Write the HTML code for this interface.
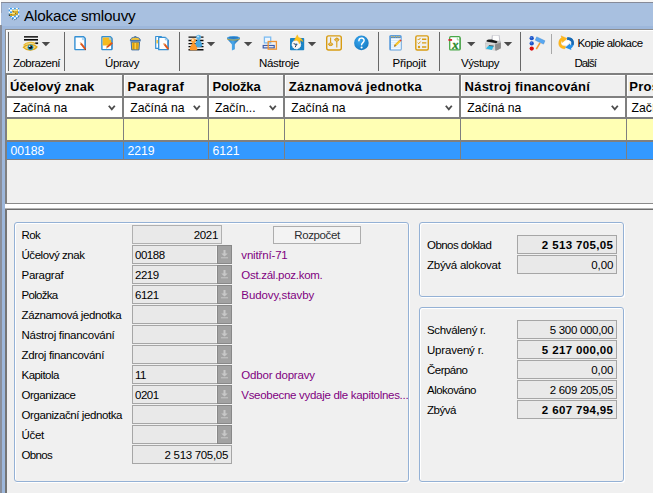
<!DOCTYPE html>
<html lang="cs"><head><meta charset="utf-8"><title>Alokace smlouvy</title>
<style>
*{box-sizing:border-box}
html,body{margin:0;padding:0}
body{width:653px;height:493px;overflow:hidden;position:relative;background:#f0f0f0;font-family:"Liberation Sans",sans-serif;font-size:11px;color:#000}
.a{position:absolute;white-space:nowrap}
svg{position:absolute;overflow:visible}
.grp{border:1px solid #94b1d5;border-radius:3px;box-shadow:inset 1px 1px 0 #fff,1px 1px 0 #fff;background:#f0f0f0}
</style></head><body>

<div class="a" style="left:0px;top:0px;width:653px;height:29px;background:#a8c0e0;"></div>
<div class="a" style="left:0px;top:0px;width:653px;height:2px;background:#f6f6f6;"></div>
<div class="a" style="left:1px;top:2px;width:652px;height:1px;background:#868a98;"></div>
<div class="a" style="left:1px;top:3px;width:1px;height:10px;background:#97a4bc;"></div>
<div class="a" style="left:0px;top:26px;width:653px;height:3px;background:#9db7db;"></div>
<div class="a" style="left:0px;top:0px;width:1px;height:25px;background:#fff;"></div>
<div class="a" style="left:0px;top:25px;width:2px;height:468px;background:#8a8f9b;"></div>
<div class="a" style="left:2px;top:26px;width:3px;height:467px;background:#9db7db;"></div>
<div class="a " style="top:5.90px;font-size:15.3px;line-height:20px;color:#000;letter-spacing:-0.219px;left:24px;">Alokace smlouvy</div>
<div class="a" style="left:5px;top:29px;width:660px;height:44px;background:#f0f0f0;border-left:1px solid #8c8c8c;border-top:1px solid #8c8c8c;box-shadow:inset 1px 1px 0 #fff"></div>
<div class="a" style="left:8px;top:32px;width:1px;height:39px;background:#686868;"></div>
<div class="a" style="left:64px;top:32px;width:1px;height:39px;background:#686868;"></div>
<div class="a" style="left:179px;top:32px;width:1px;height:39px;background:#686868;"></div>
<div class="a" style="left:378px;top:32px;width:1px;height:39px;background:#686868;"></div>
<div class="a" style="left:439px;top:32px;width:1px;height:39px;background:#686868;"></div>
<div class="a" style="left:520px;top:32px;width:1px;height:39px;background:#686868;"></div>
<div class="a" style="left:551px;top:34px;width:1px;height:20px;background:#a8a8a8;"></div>
<div class="a " style="top:55.52px;font-size:11.5px;line-height:15px;color:#000;letter-spacing:-0.531px;left:13px;">Zobrazení</div>
<div class="a " style="top:55.52px;font-size:11.5px;line-height:15px;color:#000;letter-spacing:-0.406px;left:105px;">Úpravy</div>
<div class="a " style="top:55.52px;font-size:11.5px;line-height:15px;color:#000;letter-spacing:-0.354px;left:259px;">Nástroje</div>
<div class="a " style="top:55.52px;font-size:11.5px;line-height:15px;color:#000;letter-spacing:-0.207px;left:392.5px;">Připojit</div>
<div class="a " style="top:55.52px;font-size:11.5px;line-height:15px;color:#000;letter-spacing:-0.417px;left:461px;">Výstupy</div>
<div class="a " style="top:55.52px;font-size:11.5px;line-height:15px;color:#000;letter-spacing:-0.941px;left:574.5px;">Další</div>
<div class="a " style="top:36.02px;font-size:11.5px;line-height:15px;color:#000;letter-spacing:-0.558px;left:577.5px;">Kopie alokace</div>
<svg style="left:0;top:0" width="653" height="80" viewBox="0 0 653 80">
<defs>
<pattern id="chk" x="8.050" y="7.500" width="3.900" height="3.900" patternUnits="userSpaceOnUse"><rect width="3.900" height="3.900" fill="#fff"/><rect x="1.950" width="1.950" height="1.950" fill="#3a9cf0"/><rect y="1.950" width="1.950" height="1.950" fill="#3a9cf0"/></pattern>
<linearGradient id="fun" x1="0" y1="0" x2="1" y2="0"><stop offset="0" stop-color="#1f78c4"/><stop offset=".45" stop-color="#4aa8ec"/><stop offset="1" stop-color="#155a9c"/></linearGradient>
<radialGradient id="hlp" cx=".4" cy=".35" r=".7"><stop offset="0" stop-color="#3aa8f0"/><stop offset="1" stop-color="#1478c0"/></radialGradient>
</defs>
<path d="M41.699999999999996 41.900h8.400l-4.200 4.300z" fill="#4a4a4a"/>
<path d="M206.8 41.900h8.400l-4.200 4.300z" fill="#4a4a4a"/>
<path d="M243.9 41.900h8.400l-4.200 4.300z" fill="#4a4a4a"/>
<path d="M307.8 41.900h8.400l-4.200 4.300z" fill="#4a4a4a"/>
<path d="M467.0 41.900h8.400l-4.200 4.300z" fill="#4a4a4a"/>
<path d="M503.8 41.900h8.400l-4.200 4.300z" fill="#4a4a4a"/>
<!-- title shield -->
<path d="M8.700 7.800h10.600v7.600c-.6 2.200-2.800 3.800-5.100 4.600-2.400-.8-4.700-2.400-5.500-4.600z" fill="url(#chk)"/>
<path d="M19.200 15.800c-.8 2-2.800 3.400-5 4.200M9.600 16.600c.8 1.400 2.200 2.400 3.800 3.100" fill="none" stroke="#333" stroke-width=".6" stroke-dasharray="1 .8"/>
<path d="M12 10l5.900-.6.200 5-5.100.4z" fill="#c89c1c"/>
<path d="M12.300 9.900l5.300-.5.100 1.500-5.200.5z" fill="#f4e488"/>
<path d="M13 11.600l4.600-.4.100 2.600-4.500.4z" fill="#dcb430"/>
<path d="M9.600 13.200l6-.4.200 2.800-5.900.3z" fill="#c49818"/>
<path d="M9.800 13.200l5.600-.4.100 1.100-5.600.4z" fill="#f6e890"/>
<path d="M10.200 14.400l5.200-.3.100 1.200-5.200.3z" fill="#dab22c"/>
<circle cx="13.200" cy="11.400" r=".55" fill="#8a6408"/><circle cx="15.400" cy="13.300" r=".55" fill="#5c4408"/><circle cx="11.200" cy="14.600" r=".5" fill="#8a6408"/>
<rect x="8.800" y="14.700" width="1.100" height="1.100" fill="#080808"/>
<!-- eye icon -->
<rect x="24" y="36" width="14" height="1.700" fill="#2a2a2a"/>
<rect x="24" y="39" width="14" height="1.600" fill="#0a0a0a"/>
<rect x="35.200" y="42.400" width="2.900" height="1.700" fill="#111"/>
<path d="M23.600 45.400C26 42.300 31.500 41.500 35.200 43.600" fill="none" stroke="#e6b422" stroke-width="1.300"/>
<path d="M23.400 47.400C26.200 43.800 33.800 43.500 37 46.900C34.400 50.700 27 51.300 23.400 47.400Z" fill="#f3d884" stroke="#e0aa18" stroke-width="1.300"/>
<path d="M24.600 44.600C27 43 30 42.600 33 43.200" fill="none" stroke="#f0cc58" stroke-width=".8"/>
<circle cx="30.500" cy="47.300" r="2.900" fill="#2b93b4"/>
<circle cx="30.500" cy="47.300" r="1.800" fill="#0c0c14"/>
<circle cx="29.700" cy="46.200" r=".8" fill="#fff"/>
<!-- doc 1 -->
<path d="M75.400 36.700h8.200l1.500 1.500v10.900q0 .5-.5.500h-9.200q-.5 0-.5-.5v-11.900q0-.5.500-.5z" fill="#fff" stroke="#3490d4" stroke-width="1.400" stroke-linejoin="round"/>
<path d="M82.400 37.400v2.300h2.200z" fill="#cfe6f8" stroke="#8cc4ec" stroke-width=".6"/>
<path d="M85.300 38.500v10.800" stroke="#2a7cc0" stroke-width=".7"/>
<path d="M79.800 42.500l2 .5 4.300 5.600-1.500 1.200-4.300-5.500z" fill="#de541a"/>
<path d="M79.800 42.500l2 .5-1.500 1.300z" fill="#ecd09c"/>
<path d="M85 48.700l1.100.9-.9.800z" fill="#8a2c08"/>
<!-- doc 2 yellow -->
<path d="M102.400 36.700h8l1.500 1.500v10.900q0 .5-.5.500h-9q-.5 0-.5-.5v-11.900q0-.5.500-.5z" fill="#fff" stroke="#3490d4" stroke-width="1.400" stroke-linejoin="round"/>
<path d="M102.700 37.400h7.400l1.100 1.100v6.900h-8.500z" fill="#f6ba1e"/>
<path d="M109.300 37.400v2.200h2.100z" fill="#bfe0f6" stroke="#8cc4ec" stroke-width=".6"/>
<path d="M112.100 38.500v10.800" stroke="#2a7cc0" stroke-width=".7"/>
<path d="M106 48.400l.5-2 5.200-4.500 1.200 1.500-5.100 4.400z" fill="#de541a"/>
<path d="M106 48.400l.5-2 1.300 1.500z" fill="#ecd09c"/>
<!-- trash -->
<path d="M134.300 37.200l1-1.100 1 1.100z" fill="#f4c02a" stroke="#4070a8" stroke-width=".8" stroke-linejoin="round"/>
<path d="M130.300 40.400C130.300 38.300 132.600 37.200 135.300 37.200C138 37.200 140.300 38.300 140.300 40.400Z" fill="#f6c63a" stroke="#4070a8" stroke-width="1" stroke-linejoin="round"/>
<path d="M130.100 40.900h10.400" stroke="#4070a8" stroke-width="1.300"/>
<path d="M131.200 42h8.300l-.5 7.900h-7.300z" fill="#f2b81e" stroke="#4070a8" stroke-width="1" stroke-linejoin="round"/>
<path d="M133.700 43v6.200M137 43v6.200" stroke="#c89010" stroke-width="1"/>
<path d="M135.350 43v6.200" stroke="#f8d458" stroke-width=".9"/>
<!-- copy docs -->
<path d="M155.700 36.500h5.600v11.900h-5.600z" fill="#fff" stroke="#3490d4" stroke-width="1.200" stroke-linejoin="round"/>
<rect x="156.400" y="40" width="1.500" height="3.400" fill="#f6c23a"/>
<path d="M158.700 37.400h6.700l2.600 2.500v9.800h-9.300z" fill="#fff" stroke="#3490d4" stroke-width="1.300" stroke-linejoin="round"/>
<path d="M168.200 40v9.600" stroke="#2a7cc0" stroke-width=".9"/>
<path d="M165.300 37.600v2.400h2.500" fill="#bfe0f6" stroke="#7fbbe6" stroke-width=".7"/>
<path d="M163.300 43.300l2 .5 3.800 4.800-1.500 1.200-3.800-4.700z" fill="#e0581a"/>
<path d="M163.300 43.300l2 .5-1.500 1.300z" fill="#ecd09c"/>
<!-- people -->
<path d="M188.500 37.100h15M188.500 40.500h15M188.500 43.600h15M188.500 46.600h15M188.500 49.700h15" stroke="#0a0a0a" stroke-width="1.350"/>
<path d="M198.600 38.800c1.500 1.400 3.700 4.600 3.700 6.900 0 1.700-7.400 1.700-7.400 0 0-2.300 2.200-5.500 3.700-6.900z" fill="#48a6de"/>
<circle cx="198.600" cy="37.300" r="2.450" fill="#58b2e8"/>
<circle cx="198" cy="36.600" r="1" fill="#c8e8fa"/>
<path d="M193.500 42.300c1.600 1.400 3.900 4.700 3.900 7.100 0 1.200-7.800 1.200-7.800 0 0-2.400 2.300-5.700 3.900-7.100z" fill="#ff972a"/>
<circle cx="193.500" cy="40.800" r="2.450" fill="#ffa23a"/>
<circle cx="192.900" cy="40.100" r="1" fill="#ffe8c8"/>
<!-- funnel -->
<path d="M227 38.300c0-2.900 13-2.900 13 0 0 1.300-4.200 4.500-5.200 6.300v4.700l-2.900 1.100v-5.800c-1-1.800-4.900-5-4.900-6.300z" fill="url(#fun)"/>
<ellipse cx="233.500" cy="38.200" rx="6.300" ry="1.900" fill="#4aa4e8"/>
<ellipse cx="233.500" cy="37.800" rx="5" ry="1.100" fill="#2a7cc4"/>
<path d="M227.200 38.900c2 1.500 10.600 1.500 12.600 0" fill="none" stroke="#c8a428" stroke-width=".9"/>
<!-- windows -->
<rect x="264.400" y="37.100" width="6.300" height="5.800" fill="#eef6fd" stroke="#7cbcf2" stroke-width="1.300"/>
<rect x="263.200" y="45.500" width="11" height="2.400" fill="#f4f4f8" stroke="#3c5cac" stroke-width="1.200"/>
<rect x="268.200" y="41.500" width="8.200" height="7.700" fill="none" stroke="#f09434" stroke-width="1.300"/>
<!-- clock -->
<rect x="290" y="37.900" width="14.200" height="12.400" rx=".8" fill="#1a84c6"/>
<circle cx="296.400" cy="44.600" r="4.800" fill="#f8f8f8"/>
<circle cx="296.400" cy="44.600" r="4.800" fill="none" stroke="#0c5c94" stroke-width=".7" stroke-dasharray=".8 1.700"/>
<path d="M296.400 44.600l-2.800-1M296.400 44.600l-1.200 2.600" stroke="#223" stroke-width=".9"/>
<circle cx="296.600" cy="44.300" r=".9" fill="#1a6aa8"/>
<path d="M297.300 34.800L293.900 40.700L296.400 40.300C298 40.800 298.900 42.200 299.300 44C300.100 42.600 300.400 41.300 300 40.200C301.300 40.400 302.300 41 303 41.900C302.600 39.300 300.800 37.700 298.600 37.500Z" fill="#ffc41a" stroke="#f2a80c" stroke-width=".3"/>
<!-- sliders -->
<rect x="326.700" y="35.900" width="14.600" height="14.100" rx="2" fill="none" stroke="#d89c12" stroke-width="1.400"/>
<path d="M330.600 37.500v8.500M336.800 37.500v10" stroke="#d89c12" stroke-width="1.100"/>
<ellipse cx="330.600" cy="44.300" rx="2.100" ry="1.300" fill="#f0f0f0" stroke="#d89c12" stroke-width="1"/>
<ellipse cx="336.800" cy="39.700" rx="2.100" ry="1.300" fill="#f0f0f0" stroke="#d89c12" stroke-width="1"/>
<path d="M328.400 44.300h4.400M334.600 39.700h4.400" stroke="#d89c12" stroke-width=".9"/>
<!-- help -->
<circle cx="361.400" cy="42.900" r="7.300" fill="url(#hlp)"/>
<path d="M358.900 40.700c0-3.400 5.200-3.400 5.200-.2 0 2-2.500 2.200-2.500 4.300" fill="none" stroke="#fff" stroke-width="1.500" stroke-linecap="round"/>
<circle cx="361.600" cy="47.500" r="1.050" fill="#fff"/>
<!-- notepad -->
<rect x="389.200" y="35" width="12.500" height="15.600" rx="1.600" fill="#5e9edc"/>
<rect x="391" y="38.200" width="9.800" height="11.300" fill="#f4faff"/>
<path d="M391 40.500h9.800M391 42.700h9.800M391 44.900h9.800M391 47.100h9.800" stroke="#cfe6f8" stroke-width=".8"/>
<path d="M391.200 36.700h9.400" stroke="#e6c660" stroke-width="1.600" stroke-dasharray="1.300 1.100"/>
<path d="M391.200 37.400h9.400" stroke="#3a5a8c" stroke-width=".6" stroke-dasharray="1.300 1.100"/>
<path d="M394 46.700l.7-2.100 4.600-4.500 1.500 1.500-4.600 4.500z" fill="#f4b81c"/>
<path d="M395.400 45.900l4.600-4.500" stroke="#f8dc50" stroke-width=".8"/>
<path d="M399.300 40.100l.9-.9 1.500 1.500-.9.900z" fill="#d8382c"/>
<path d="M394 46.700l.7-2.100 1.400 1.500z" fill="#8a6438"/>
<!-- checklist -->
<rect x="415.800" y="35.900" width="12.500" height="14.100" rx="1.500" fill="none" stroke="#d89c12" stroke-width="1.400"/>
<path d="M417.700 39l1 1 1.800-2.100M417.700 42.700l1 1 1.800-2.100" fill="none" stroke="#d89c12" stroke-width="1"/>
<circle cx="419" cy="47" r="1.200" fill="#d89c12"/>
<path d="M422 39.200h4.300M422 42.900h4.300M422 47h4.300" stroke="#d89c12" stroke-width="1.400"/>
<!-- excel -->
<rect x="449.700" y="36.700" width="10.300" height="13.200" rx="1" fill="#fff" stroke="#48a848" stroke-width="1.300"/>
<path d="M460.300 37.600v11.800" stroke="#3c9a3c" stroke-width=".8"/>
<path d="M457.300 37.600v2.300h2.300" fill="none" stroke="#8ccc8c" stroke-width=".8"/>
<rect x="448.400" y="39.100" width="3.700" height="1.700" fill="#d81c2c"/>
<text x="452.300" y="49.400" font-family="Liberation Serif,serif" font-weight="bold" font-style="italic" font-size="12.500" fill="#2c8c2c" stroke="#2c8c2c" stroke-width=".35">x</text>
<!-- printer -->
<path d="M491.800 35.300h7.800l.8 6.400h-9.200z" fill="#c4c4cc"/>
<path d="M492.900 35.700h5.800l.5 5.200h-6.600z" fill="#fdfdfd"/>
<path d="M485 44.200C485 42.600 486 41 487.400 40.200L499.600 40.800C500.400 41 500.900 41.600 500.900 42.400V48.200L496.600 50.600L485.600 49.200Z" fill="#bdbdbd"/>
<path d="M485.200 43.400L495 44.600L495.300 50.400L485.600 49.200Z" fill="#d6d6d6"/>
<path d="M495 44.600L500.900 42.400V48.200L496.600 50.600L495.300 50.400Z" fill="#8c8c8c"/>
<path d="M486.500 40.700C486.900 39.700 490 39.300 493.200 39.900L497.200 41.300C497.600 42.400 496.800 43.300 495.400 43.100L487.600 41.700C486.800 41.500 486.400 41.100 486.500 40.700Z" fill="#1a1a1a"/>
<path d="M485.800 42.600L494.800 43.900" stroke="#f0f0f0" stroke-width=".7"/>
<path d="M485.900 48.600L488.900 45.500L493.700 46L491.900 49.900Z" fill="#2cb8e4"/>
<path d="M488.900 45.500L493.700 46" stroke="#444" stroke-width=".8"/>
<!-- hammer -->
<circle cx="531.700" cy="38.200" r="2.150" fill="#1c54c8"/>
<circle cx="531.700" cy="43.400" r="2.150" fill="#1c54c8"/>
<circle cx="531.700" cy="48.600" r="2.150" fill="#dc0c0c"/>
<circle cx="531.200" cy="37.600" r=".8" fill="#4c84e8"/><circle cx="531.200" cy="42.800" r=".8" fill="#4c84e8"/>
<path d="M539.300 42.500l1.400.8-3.700 6.300-1.400-.9z" fill="#f09a34"/>
<path d="M536.700 36.900l8.200 3.900-1.400 3.300-8.200-3.900z" fill="#58a8f2" stroke="#4088d0" stroke-width=".5" stroke-linejoin="round"/>
<!-- refresh -->
<path d="M560.500 44.500l4-3.600 6.800-.4-4.400 4.600z" fill="#fff"/>
<path d="M565 48.800C560.500 48.800 558.600 46 558.700 43C558.800 40.400 560 38.600 561.600 37.600L561 35.800L567.200 38.400L562.400 42.600L562 40.600C561.200 41.400 560.900 42.400 561 43.400C561.200 45 562.600 46 565.600 46.200Z" fill="#ffb81c" stroke="#f0a00c" stroke-width=".3"/>
<path d="M567.400 37.200C572 37 574 40 573.900 43C573.800 45.600 572.600 47.400 571 48.400L571.400 50L565.200 47.400L570 43.400L570.500 45.400C571.300 44.600 571.600 43.600 571.500 42.600C571.300 41 570 40 567 39.800Z" fill="#2890e8"/>
<path d="M567.400 37.200C572 37 574 40 573.900 43C573.850 43.800 573.700 44.600 573.400 45.300L571.200 44.200C571.500 43.700 571.550 43.100 571.500 42.600C571.300 41 570 40 567 39.800Z" fill="#1a68b0"/>
</svg>

<div class="a" style="left:5px;top:73px;width:660px;height:87px;background:#7f7f7f;"></div>
<div class="a" style="left:5px;top:160px;width:2px;height:44px;background:#7f7f7f;"></div>
<div class="a" style="left:7px;top:75px;width:115px;height:21px;background:#f0f0f0;border-left:1px solid #fff;border-top:1px solid #fff"></div>
<div class="a " style="top:78.00px;font-size:13px;line-height:17px;color:#000;font-weight:bold;letter-spacing:0.177px;left:10px;">Účelový znak</div>
<div class="a" style="left:7px;top:98px;width:115px;height:19px;background:#fff;"></div>
<div class="a " style="top:99.77px;font-size:12.2px;line-height:16px;color:#000;left:13px;">Začíná na</div>
<svg style="left:107.8px;top:105.2px" width="8" height="6" viewBox="0 0 8 6"><path d="M0.8 0.7 L3.8 4.4 L6.8 0.7" fill="none" stroke="#4c4c4c" stroke-width="1.8"/></svg>
<div class="a" style="left:124px;top:75px;width:83px;height:21px;background:#f0f0f0;border-left:1px solid #fff;border-top:1px solid #fff"></div>
<div class="a " style="top:78.00px;font-size:13px;line-height:17px;color:#000;font-weight:bold;letter-spacing:0.5px;left:127.5px;">Paragraf</div>
<div class="a" style="left:124px;top:98px;width:83px;height:19px;background:#fff;"></div>
<div class="a " style="top:99.77px;font-size:12.2px;line-height:16px;color:#000;left:130.3px;">Začíná na</div>
<svg style="left:192.8px;top:105.2px" width="8" height="6" viewBox="0 0 8 6"><path d="M0.8 0.7 L3.8 4.4 L6.8 0.7" fill="none" stroke="#4c4c4c" stroke-width="1.8"/></svg>
<div class="a" style="left:209px;top:75px;width:74px;height:21px;background:#f0f0f0;border-left:1px solid #fff;border-top:1px solid #fff"></div>
<div class="a " style="top:78.00px;font-size:13px;line-height:17px;color:#000;font-weight:bold;letter-spacing:-0.161px;left:212.5px;">Položka</div>
<div class="a" style="left:209px;top:98px;width:74px;height:19px;background:#fff;"></div>
<div class="a " style="top:99.77px;font-size:12.2px;line-height:16px;color:#000;left:215px;">Začín...</div>
<svg style="left:268.8px;top:105.2px" width="8" height="6" viewBox="0 0 8 6"><path d="M0.8 0.7 L3.8 4.4 L6.8 0.7" fill="none" stroke="#4c4c4c" stroke-width="1.8"/></svg>
<div class="a" style="left:285px;top:75px;width:174px;height:21px;background:#f0f0f0;border-left:1px solid #fff;border-top:1px solid #fff"></div>
<div class="a " style="top:78.00px;font-size:13px;line-height:17px;color:#000;font-weight:bold;letter-spacing:0.296px;left:288.75px;">Záznamová jednotka</div>
<div class="a" style="left:285px;top:98px;width:174px;height:19px;background:#fff;"></div>
<div class="a " style="top:99.77px;font-size:12.2px;line-height:16px;color:#000;left:291.25px;">Začíná na</div>
<svg style="left:444.8px;top:105.2px" width="8" height="6" viewBox="0 0 8 6"><path d="M0.8 0.7 L3.8 4.4 L6.8 0.7" fill="none" stroke="#4c4c4c" stroke-width="1.8"/></svg>
<div class="a" style="left:461px;top:75px;width:164px;height:21px;background:#f0f0f0;border-left:1px solid #fff;border-top:1px solid #fff"></div>
<div class="a " style="top:78.00px;font-size:13px;line-height:17px;color:#000;font-weight:bold;letter-spacing:0.256px;left:464.5px;">Nástroj financování</div>
<div class="a" style="left:461px;top:98px;width:164px;height:19px;background:#fff;"></div>
<div class="a " style="top:99.77px;font-size:12.2px;line-height:16px;color:#000;left:467.2px;">Začíná na</div>
<svg style="left:610.8px;top:105.2px" width="8" height="6" viewBox="0 0 8 6"><path d="M0.8 0.7 L3.8 4.4 L6.8 0.7" fill="none" stroke="#4c4c4c" stroke-width="1.8"/></svg>
<div class="a" style="left:627px;top:75px;width:73px;height:21px;background:#f0f0f0;border-left:1px solid #fff;border-top:1px solid #fff"></div>
<div class="a " style="top:78.00px;font-size:13px;line-height:17px;color:#000;font-weight:bold;letter-spacing:0.3px;left:629.2px;">Pros</div>
<div class="a" style="left:627px;top:98px;width:73px;height:19px;background:#fff;"></div>
<div class="a " style="top:99.77px;font-size:12.2px;line-height:16px;color:#000;left:631.6px;">Začíná na</div>
<div class="a" style="left:7px;top:119px;width:660px;height:21px;background:#ffffb4;"></div>
<div class="a" style="left:7px;top:142px;width:660px;height:17px;background:#3399ff;"></div>
<div class="a" style="left:123px;top:119px;width:1px;height:40px;background:#7f7f7f;"></div>
<div class="a" style="left:208px;top:119px;width:1px;height:40px;background:#7f7f7f;"></div>
<div class="a" style="left:284px;top:119px;width:1px;height:40px;background:#7f7f7f;"></div>
<div class="a" style="left:460px;top:119px;width:1px;height:40px;background:#7f7f7f;"></div>
<div class="a" style="left:626px;top:119px;width:1px;height:40px;background:#7f7f7f;"></div>
<div class="a" style="left:7px;top:160px;width:660px;height:43px;background:#f0f0f0;"></div>
<div class="a " style="top:142.77px;font-size:12.2px;line-height:16px;color:#fff;left:10.5px;">00188</div>
<div class="a " style="top:142.77px;font-size:12.2px;line-height:16px;color:#fff;left:127.5px;">2219</div>
<div class="a " style="top:142.77px;font-size:12.2px;line-height:16px;color:#fff;left:212.5px;">6121</div>
<div class="a" style="left:5px;top:203px;width:660px;height:1px;background:#8a8a8a;"></div>
<div class="a" style="left:5px;top:204px;width:660px;height:4px;background:#fff;"></div>
<div class="a" style="left:5px;top:208px;width:660px;height:1px;background:#b4b4b4;"></div>
<div class="a" style="left:5px;top:209px;width:660px;height:1px;background:#6c6c6c;"></div>
<div class="a" style="left:5px;top:209px;width:2px;height:290px;background:#747474;"></div>
<div class="a grp" style="left:14px;top:222px;width:395px;height:260px"></div>
<div class="a grp" style="left:419px;top:222px;width:205px;height:75px"></div>
<div class="a grp" style="left:419px;top:307px;width:205px;height:175px"></div>
<div class="a " style="top:227.52px;font-size:11.5px;line-height:15px;color:#000;letter-spacing:-0.651px;left:21.5px;">Rok</div>
<div class="a " style="top:247.52px;font-size:11.5px;line-height:15px;color:#000;letter-spacing:-0.449px;left:21.5px;">Účelový znak</div>
<div class="a " style="top:267.52px;font-size:11.5px;line-height:15px;color:#000;letter-spacing:-0.264px;left:21.5px;">Paragraf</div>
<div class="a " style="top:287.52px;font-size:11.5px;line-height:15px;color:#000;letter-spacing:-0.703px;left:21.5px;">Položka</div>
<div class="a " style="top:307.52px;font-size:11.5px;line-height:15px;color:#000;letter-spacing:-0.393px;left:21.5px;">Záznamová jednotka</div>
<div class="a " style="top:327.52px;font-size:11.5px;line-height:15px;color:#000;letter-spacing:-0.287px;left:21.5px;">Nástroj financování</div>
<div class="a " style="top:347.52px;font-size:11.5px;line-height:15px;color:#000;letter-spacing:-0.336px;left:21.5px;">Zdroj financování</div>
<div class="a " style="top:367.52px;font-size:11.5px;line-height:15px;color:#000;letter-spacing:-0.533px;left:21.5px;">Kapitola</div>
<div class="a " style="top:387.52px;font-size:11.5px;line-height:15px;color:#000;letter-spacing:-0.481px;left:21.5px;">Organizace</div>
<div class="a " style="top:407.52px;font-size:11.5px;line-height:15px;color:#000;letter-spacing:-0.409px;left:21.5px;">Organizační jednotka</div>
<div class="a " style="top:427.52px;font-size:11.5px;line-height:15px;color:#000;letter-spacing:-0.314px;left:21.5px;">Účet</div>
<div class="a " style="top:447.52px;font-size:11.5px;line-height:15px;color:#000;letter-spacing:-0.638px;left:21.5px;">Obnos</div>
<div class="a" style="left:132px;top:225px;width:90px;height:19px;background:#e9e9e9;border:1px solid #b0b0b0"></div>
<div class="a " style="top:227.52px;font-size:11.5px;line-height:15px;color:#000;letter-spacing:-0.323px;right:435px;">2021</div>
<div class="a" style="left:132px;top:245px;width:84px;height:19px;background:#e9e9e9;border:1px solid #a6a6a6;border-right:none"></div>
<div class="a" style="left:216px;top:245px;width:1px;height:19px;background:#f4f4f4;border-top:1px solid #a6a6a6;border-bottom:1px solid #a6a6a6"></div>
<div class="a" style="left:217px;top:245px;width:15px;height:19px;background:#a2a2a2;border:1px solid #888"></div>
<svg style="left:221px;top:250px" width="7" height="9" viewBox="0 0 7 9"><path d="M2.5 0h2v3.5h2.3L3.5 6.6 0.2 3.5h2.3z" fill="#c8c8c8"/><rect x="0" y="7.3" width="7" height="1" fill="#c8c8c8"/></svg>
<div class="a " style="top:247.52px;font-size:11.5px;line-height:15px;color:#000;letter-spacing:-0.462px;left:135px;">00188</div>
<div class="a" style="left:132px;top:265px;width:84px;height:19px;background:#e9e9e9;border:1px solid #a6a6a6;border-right:none"></div>
<div class="a" style="left:216px;top:265px;width:1px;height:19px;background:#f4f4f4;border-top:1px solid #a6a6a6;border-bottom:1px solid #a6a6a6"></div>
<div class="a" style="left:217px;top:265px;width:15px;height:19px;background:#a2a2a2;border:1px solid #888"></div>
<svg style="left:221px;top:270px" width="7" height="9" viewBox="0 0 7 9"><path d="M2.5 0h2v3.5h2.3L3.5 6.6 0.2 3.5h2.3z" fill="#c8c8c8"/><rect x="0" y="7.3" width="7" height="1" fill="#c8c8c8"/></svg>
<div class="a " style="top:267.52px;font-size:11.5px;line-height:15px;color:#000;letter-spacing:-0.461px;left:135px;">2219</div>
<div class="a" style="left:132px;top:285px;width:84px;height:19px;background:#e9e9e9;border:1px solid #a6a6a6;border-right:none"></div>
<div class="a" style="left:216px;top:285px;width:1px;height:19px;background:#f4f4f4;border-top:1px solid #a6a6a6;border-bottom:1px solid #a6a6a6"></div>
<div class="a" style="left:217px;top:285px;width:15px;height:19px;background:#a2a2a2;border:1px solid #888"></div>
<svg style="left:221px;top:290px" width="7" height="9" viewBox="0 0 7 9"><path d="M2.5 0h2v3.5h2.3L3.5 6.6 0.2 3.5h2.3z" fill="#c8c8c8"/><rect x="0" y="7.3" width="7" height="1" fill="#c8c8c8"/></svg>
<div class="a " style="top:287.52px;font-size:11.5px;line-height:15px;color:#000;letter-spacing:-0.461px;left:135px;">6121</div>
<div class="a" style="left:132px;top:305px;width:84px;height:19px;background:#e9e9e9;border:1px solid #a6a6a6;border-right:none"></div>
<div class="a" style="left:216px;top:305px;width:1px;height:19px;background:#f4f4f4;border-top:1px solid #a6a6a6;border-bottom:1px solid #a6a6a6"></div>
<div class="a" style="left:217px;top:305px;width:15px;height:19px;background:#a2a2a2;border:1px solid #888"></div>
<svg style="left:221px;top:310px" width="7" height="9" viewBox="0 0 7 9"><path d="M2.5 0h2v3.5h2.3L3.5 6.6 0.2 3.5h2.3z" fill="#c8c8c8"/><rect x="0" y="7.3" width="7" height="1" fill="#c8c8c8"/></svg>
<div class="a" style="left:132px;top:325px;width:84px;height:19px;background:#e9e9e9;border:1px solid #a6a6a6;border-right:none"></div>
<div class="a" style="left:216px;top:325px;width:1px;height:19px;background:#f4f4f4;border-top:1px solid #a6a6a6;border-bottom:1px solid #a6a6a6"></div>
<div class="a" style="left:217px;top:325px;width:15px;height:19px;background:#a2a2a2;border:1px solid #888"></div>
<svg style="left:221px;top:330px" width="7" height="9" viewBox="0 0 7 9"><path d="M2.5 0h2v3.5h2.3L3.5 6.6 0.2 3.5h2.3z" fill="#c8c8c8"/><rect x="0" y="7.3" width="7" height="1" fill="#c8c8c8"/></svg>
<div class="a" style="left:132px;top:345px;width:84px;height:19px;background:#e9e9e9;border:1px solid #a6a6a6;border-right:none"></div>
<div class="a" style="left:216px;top:345px;width:1px;height:19px;background:#f4f4f4;border-top:1px solid #a6a6a6;border-bottom:1px solid #a6a6a6"></div>
<div class="a" style="left:217px;top:345px;width:15px;height:19px;background:#a2a2a2;border:1px solid #888"></div>
<svg style="left:221px;top:350px" width="7" height="9" viewBox="0 0 7 9"><path d="M2.5 0h2v3.5h2.3L3.5 6.6 0.2 3.5h2.3z" fill="#c8c8c8"/><rect x="0" y="7.3" width="7" height="1" fill="#c8c8c8"/></svg>
<div class="a" style="left:132px;top:365px;width:84px;height:19px;background:#e9e9e9;border:1px solid #a6a6a6;border-right:none"></div>
<div class="a" style="left:216px;top:365px;width:1px;height:19px;background:#f4f4f4;border-top:1px solid #a6a6a6;border-bottom:1px solid #a6a6a6"></div>
<div class="a" style="left:217px;top:365px;width:15px;height:19px;background:#a2a2a2;border:1px solid #888"></div>
<svg style="left:221px;top:370px" width="7" height="9" viewBox="0 0 7 9"><path d="M2.5 0h2v3.5h2.3L3.5 6.6 0.2 3.5h2.3z" fill="#c8c8c8"/><rect x="0" y="7.3" width="7" height="1" fill="#c8c8c8"/></svg>
<div class="a " style="top:367.52px;font-size:11.5px;line-height:15px;color:#000;letter-spacing:-0.437px;left:135px;">11</div>
<div class="a" style="left:132px;top:385px;width:84px;height:19px;background:#e9e9e9;border:1px solid #a6a6a6;border-right:none"></div>
<div class="a" style="left:216px;top:385px;width:1px;height:19px;background:#f4f4f4;border-top:1px solid #a6a6a6;border-bottom:1px solid #a6a6a6"></div>
<div class="a" style="left:217px;top:385px;width:15px;height:19px;background:#a2a2a2;border:1px solid #888"></div>
<svg style="left:221px;top:390px" width="7" height="9" viewBox="0 0 7 9"><path d="M2.5 0h2v3.5h2.3L3.5 6.6 0.2 3.5h2.3z" fill="#c8c8c8"/><rect x="0" y="7.3" width="7" height="1" fill="#c8c8c8"/></svg>
<div class="a " style="top:387.52px;font-size:11.5px;line-height:15px;color:#000;letter-spacing:-0.461px;left:135px;">0201</div>
<div class="a" style="left:132px;top:405px;width:84px;height:19px;background:#e9e9e9;border:1px solid #a6a6a6;border-right:none"></div>
<div class="a" style="left:216px;top:405px;width:1px;height:19px;background:#f4f4f4;border-top:1px solid #a6a6a6;border-bottom:1px solid #a6a6a6"></div>
<div class="a" style="left:217px;top:405px;width:15px;height:19px;background:#a2a2a2;border:1px solid #888"></div>
<svg style="left:221px;top:410px" width="7" height="9" viewBox="0 0 7 9"><path d="M2.5 0h2v3.5h2.3L3.5 6.6 0.2 3.5h2.3z" fill="#c8c8c8"/><rect x="0" y="7.3" width="7" height="1" fill="#c8c8c8"/></svg>
<div class="a" style="left:132px;top:425px;width:84px;height:19px;background:#e9e9e9;border:1px solid #a6a6a6;border-right:none"></div>
<div class="a" style="left:216px;top:425px;width:1px;height:19px;background:#f4f4f4;border-top:1px solid #a6a6a6;border-bottom:1px solid #a6a6a6"></div>
<div class="a" style="left:217px;top:425px;width:15px;height:19px;background:#a2a2a2;border:1px solid #888"></div>
<svg style="left:221px;top:430px" width="7" height="9" viewBox="0 0 7 9"><path d="M2.5 0h2v3.5h2.3L3.5 6.6 0.2 3.5h2.3z" fill="#c8c8c8"/><rect x="0" y="7.3" width="7" height="1" fill="#c8c8c8"/></svg>
<div class="a" style="left:132px;top:445px;width:100px;height:19px;background:#e9e9e9;border:1px solid #a6a6a6"></div>
<div class="a " style="top:447.52px;font-size:11.5px;line-height:15px;color:#000;letter-spacing:-0.313px;right:425px;">2 513 705,05</div>
<div class="a" style="left:273px;top:226px;width:88px;height:18px;background:#f3f3f3;border:1px solid #adadad"></div>
<div class="a " style="top:227.52px;font-size:11.5px;line-height:15px;color:#2c2c30;letter-spacing:-0.362px;left:294.2px;">Rozpočet</div>
<div class="a " style="top:247.52px;font-size:11.5px;line-height:15px;color:#800080;letter-spacing:-0.164px;left:241.3px;">vnitřní-71</div>
<div class="a " style="top:267.52px;font-size:11.5px;line-height:15px;color:#800080;letter-spacing:-0.278px;left:241.3px;">Ost.zál.poz.kom.</div>
<div class="a " style="top:287.52px;font-size:11.5px;line-height:15px;color:#800080;letter-spacing:-0.072px;left:241.3px;">Budovy,stavby</div>
<div class="a " style="top:367.52px;font-size:11.5px;line-height:15px;color:#800080;letter-spacing:-0.198px;left:241.3px;">Odbor dopravy</div>
<div class="a " style="top:387.52px;font-size:11.5px;line-height:15px;color:#800080;letter-spacing:-0.297px;left:241.3px;">Vseobecne vydaje dle kapitolnes...</div>
<div class="a " style="top:237.52px;font-size:11.5px;line-height:15px;color:#000;letter-spacing:-0.556px;left:427px;">Obnos doklad</div>
<div class="a" style="left:517px;top:235px;width:100px;height:19px;background:#e9e9e9;border:1px solid #a6a6a6"></div>
<div class="a " style="top:237.52px;font-size:11.5px;line-height:15px;color:#000;font-weight:bold;letter-spacing:0.362px;right:39.700000000000045px;">2 513 705,05</div>
<div class="a " style="top:257.52px;font-size:11.5px;line-height:15px;color:#000;letter-spacing:-0.269px;left:427px;">Zbývá alokovat</div>
<div class="a" style="left:517px;top:255px;width:100px;height:19px;background:#e9e9e9;border:1px solid #a6a6a6"></div>
<div class="a " style="top:257.52px;font-size:11.5px;line-height:15px;color:#000;letter-spacing:-0.098px;right:39.700000000000045px;">0,00</div>
<div class="a " style="top:322.52px;font-size:11.5px;line-height:15px;color:#000;letter-spacing:-0.33px;left:427px;">Schválený r.</div>
<div class="a" style="left:517px;top:320px;width:100px;height:19px;background:#e9e9e9;border:1px solid #a6a6a6"></div>
<div class="a " style="top:322.52px;font-size:11.5px;line-height:15px;color:#000;letter-spacing:-0.296px;right:39.700000000000045px;">5 300 000,00</div>
<div class="a " style="top:342.52px;font-size:11.5px;line-height:15px;color:#000;letter-spacing:-0.192px;left:427px;">Upravený r.</div>
<div class="a" style="left:517px;top:340px;width:100px;height:19px;background:#e9e9e9;border:1px solid #a6a6a6"></div>
<div class="a " style="top:342.52px;font-size:11.5px;line-height:15px;color:#000;font-weight:bold;letter-spacing:0.362px;right:39.700000000000045px;">5 217 000,00</div>
<div class="a " style="top:362.52px;font-size:11.5px;line-height:15px;color:#000;letter-spacing:-0.532px;left:427px;">Čerpáno</div>
<div class="a" style="left:517px;top:360px;width:100px;height:19px;background:#e9e9e9;border:1px solid #a6a6a6"></div>
<div class="a " style="top:362.52px;font-size:11.5px;line-height:15px;color:#000;letter-spacing:-0.098px;right:39.700000000000045px;">0,00</div>
<div class="a " style="top:382.52px;font-size:11.5px;line-height:15px;color:#000;letter-spacing:-0.524px;left:427px;">Alokováno</div>
<div class="a" style="left:517px;top:380px;width:100px;height:19px;background:#e9e9e9;border:1px solid #a6a6a6"></div>
<div class="a " style="top:382.52px;font-size:11.5px;line-height:15px;color:#000;letter-spacing:-0.296px;right:39.700000000000045px;">2 609 205,05</div>
<div class="a " style="top:402.52px;font-size:11.5px;line-height:15px;color:#000;letter-spacing:-0.466px;left:427px;">Zbývá</div>
<div class="a" style="left:517px;top:400px;width:100px;height:19px;background:#e9e9e9;border:1px solid #a6a6a6"></div>
<div class="a " style="top:402.52px;font-size:11.5px;line-height:15px;color:#000;font-weight:bold;letter-spacing:0.362px;right:39.700000000000045px;">2 607 794,95</div>
</body></html>
